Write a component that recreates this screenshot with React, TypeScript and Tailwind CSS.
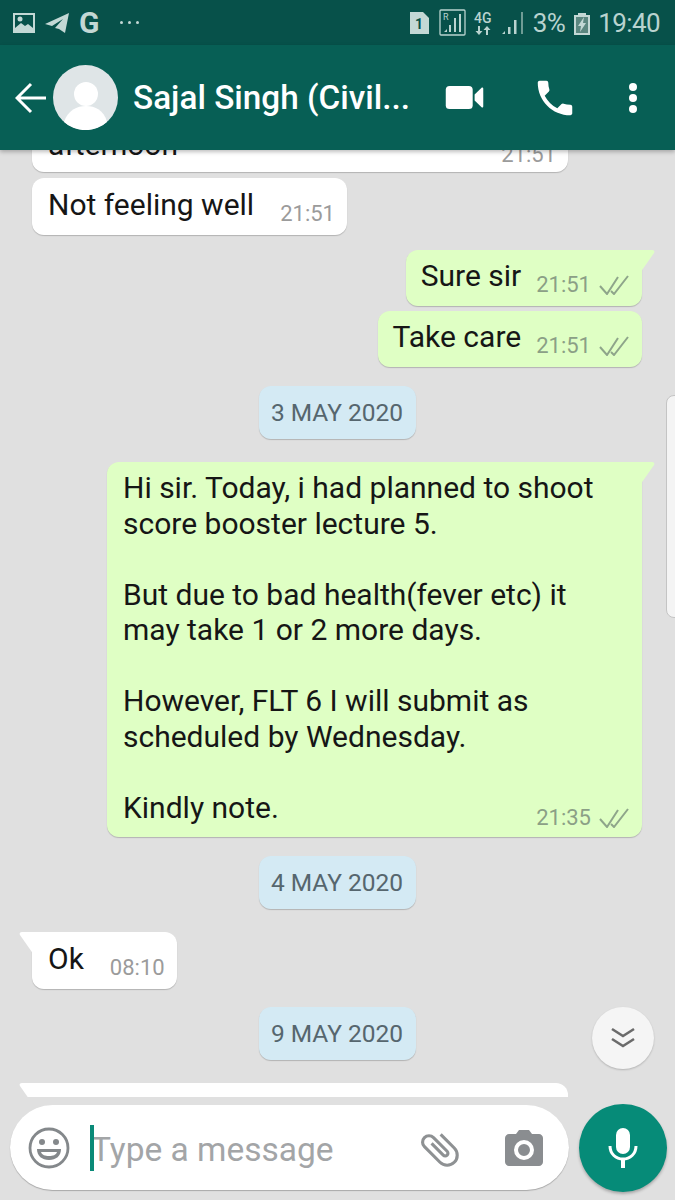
import { ReactNode } from "react";

const DoubleCheck = () => (
  <svg width="30" height="20" viewBox="0 0 30 20" fill="none" stroke="#8ea58a" strokeWidth="2" className="ml-[8px]">
    <path d="M1 11l7 8L19 2" />
    <path d="M12 16l3 3L29 1" />
  </svg>
);

function Time({ t, sent }: { t: string; sent?: boolean }) {
  return (
    <span className={`flex items-center text-[22px] leading-[26px] ${sent ? "text-[#8b9f86]" : "text-[#9b9b9b]"}`}>
      {t}
      {sent && <DoubleCheck />}
    </span>
  );
}

function TailRight() {
  return (
    <svg width="16" height="24" viewBox="0 0 16 24" className="absolute right-[-14px] top-0">
      <path d="M0 0h12c2 0 3 1.500 2 3L0 23z" fill="#dfffc4" />
    </svg>
  );
}

function TailLeft() {
  return (
    <svg width="16" height="24" viewBox="0 0 16 24" className="absolute left-[-14px] top-0">
      <path d="M16 0H4C2 0 1 1.500 2 3l14 20z" fill="#ffffff" />
    </svg>
  );
}

function Sent({ text, time, tail, className }: { text: string; time: string; tail?: boolean; className?: string }) {
  return (
    <div className={`relative flex h-[56px] shrink-0 items-start self-end rounded-[12px] bg-[#dfffc4] pl-[15px] pr-[13px] shadow-[0_1px_1px_rgba(0,0,0,0.2)] ${tail ? "rounded-tr-none" : ""} ${className ?? ""}`}>
      {tail && <TailRight />}
      <span className="mt-[8px] text-[30px] leading-[36px] text-[#161616]">{text}</span>
      <span className="ml-[15px] mt-[22px]">
        <Time t={time} sent />
      </span>
    </div>
  );
}

function Received({ text, time, tail, className }: { text: string; time: string; tail?: boolean; className?: string }) {
  return (
    <div className={`relative flex h-[57px] shrink-0 items-start self-start rounded-[12px] bg-white pl-[16px] pr-[12px] shadow-[0_1px_1px_rgba(0,0,0,0.2)] ${tail ? "rounded-tl-none" : ""} ${className ?? ""}`}>
      {tail && <TailLeft />}
      <span className="mt-[9px] text-[30px] leading-[36px] text-[#161616]">{text}</span>
      <span className="ml-[26px] mt-[23px]">
        <Time t={time} />
      </span>
    </div>
  );
}

function DateChip({ children, className }: { children: ReactNode; className?: string }) {
  return (
    <div className={`flex h-[53px] w-[157px] shrink-0 items-center justify-center self-center rounded-[12px] bg-[#d4eaf4] pt-[2px] text-[24.500px] text-[#56666e] shadow-[0_1px_1px_rgba(0,0,0,0.2)] ${className ?? ""}`}>
      {children}
    </div>
  );
}

function StatusBar() {
  return (
    <div className="flex h-[45px] shrink-0 items-center justify-between bg-[#07514a] pl-[13px] pr-[15px] text-[#b9d3cf]">
      <div className="flex items-center">
        <svg width="22" height="22" viewBox="0 0 22 22">
          <path fill="#c3d8d5" fillRule="evenodd" d="M0 1h22v20H0zM2 3v13l6-5 4 3 3-2 5 4V3z" />
          <circle cx="7" cy="7" r="2.500" fill="#c3d8d5" />
        </svg>
        <svg width="24" height="22" viewBox="0 0 24 22" className="ml-[10px]">
          <path fill="#c3d8d5" d="M0 12L24 1l-4 20-6-4-4-1 8-9-11 7z" />
        </svg>
        <span className="ml-[10px] text-[30px] font-bold leading-none text-[#c3d8d5]">G</span>
        <span className="ml-[21px] flex gap-[5px]">
          <i className="h-[3px] w-[3px] rounded-full bg-[#c3d8d5]" />
          <i className="h-[3px] w-[3px] rounded-full bg-[#c3d8d5]" />
          <i className="h-[3px] w-[3px] rounded-full bg-[#c3d8d5]" />
        </span>
      </div>
      <div className="flex items-center">
        <svg width="21" height="24" viewBox="0 0 21 24">
          <path fill="#c3d8d5" d="M1 1h13l6 6v16H1z" />
          <text x="6" y="18" fontSize="14" fontWeight="700" fill="#07514a" fontFamily="Roboto">1</text>
        </svg>
        <svg width="27" height="27" viewBox="0 0 27 27" className="ml-[9px]" fill="none">
          <rect x="1" y="1" width="25" height="25" rx="1" stroke="#b9d3cf" strokeWidth="1.300" />
          <text x="4" y="11" fontSize="9" fill="#b9d3cf" fontFamily="Roboto">R</text>
          <path fill="#b9d3cf" d="M5 23l3-3v3zM10 23v-7h2v7zM15 23V9h2v14zM20 23V5h2v18z" />
        </svg>
        <div className="ml-[7px] flex w-[20px] flex-col items-center gap-[1px] leading-none">
          <span className="text-[14px] font-medium leading-[14px]">4G</span>
          <svg width="16" height="9" viewBox="0 0 16 9" fill="#b9d3cf">
            <path d="M3 0h2v5h2.500L4 9 .5 5H3zM11 9h2V4h2.500L12 0 8.500 4H11z" />
          </svg>
        </div>
        <svg width="22" height="24" viewBox="0 0 22 24" className="ml-[9px]">
          <path fill="#b9d3cf" d="M0 23l3-3v3zM6 23v-7h2.500v7zM12 23V9h2.500v14z" />
          <path fill="#6f9c95" d="M19 23V1h2v22z" />
        </svg>
        <span className="ml-[9px] text-[26px] leading-none tracking-[-0.6px]">3%</span>
        <svg width="16" height="24" viewBox="0 0 16 24" className="ml-[9px]">
          <path fill="#c3d8d5" d="M4 2h8v2h4v20H0V4h4z" />
          <path fill="#5b8780" d="M2 6h12v16H2z" />
          <path fill="#c3d8d5" d="M10 6L4 15h3l-1 6 6-9H9z" />
        </svg>
        <span className="ml-[8px] text-[26px] leading-none tracking-[-0.6px]">19:40</span>
      </div>
    </div>
  );
}

function Header() {
  return (
    <header className="relative z-10 flex h-[105px] shrink-0 items-center bg-[#075f55] text-white shadow-[0_2px_4px_rgba(0,0,0,0.25)]">
      <svg width="32" height="32" viewBox="0 0 32 32" fill="none" stroke="white" strokeWidth="3" className="ml-[15px] shrink-0">
        <path d="M31 16H3M16 2L2 16l14 14" />
      </svg>
      <svg width="65" height="65" viewBox="0 0 65 65" className="ml-[6px] shrink-0">
        <circle cx="32.500" cy="32.500" r="32.500" fill="#dfe5e7" />
        <circle cx="33" cy="29" r="12" fill="white" />
        <path fill="white" d="M11 57c4-12 13-16 22-16s18 4 21 16a32.500 32.500 0 0 1-43 0z" />
      </svg>
      <span className="ml-[15px] w-[280px] shrink-0 whitespace-nowrap text-[33.300px] font-medium leading-[40px]">Sajal Singh (Civil...</span>
      <svg width="40" height="25" viewBox="0 0 40 26" className="ml-[32px] shrink-0" fill="white">
        <rect x="0" y="1" width="28" height="24" rx="4" />
        <path d="M30 10l7-7c1-1 2-.5 2 1v18c0 1.500-1 2-2 1l-7-7z" />
      </svg>
      <svg width="46" height="46" viewBox="0 0 24 24" className="ml-[47px] shrink-0" fill="white">
        <path d="M6.620 10.790c1.440 2.830 3.760 5.140 6.590 6.590l2.200-2.200c.27-.27.67-.36 1.020-.24 1.120.37 2.330.57 3.570.57.550 0 1 .45 1 1V20c0 .55-.45 1-1 1C10.610 21 3 13.390 3 4c0-.55.45-1 1-1h3.500c.55 0 1 .45 1 1 0 1.250.2 2.450.57 3.570.11.350.03.740-.25 1.020l-2.200 2.200z" />
      </svg>
      <div className="ml-[51px] flex shrink-0 flex-col gap-[3px]">
        <i className="h-[8px] w-[8px] rounded-full bg-white" />
        <i className="h-[8px] w-[8px] rounded-full bg-white" />
        <i className="h-[8px] w-[8px] rounded-full bg-white" />
      </div>
    </header>
  );
}

function Composer() {
  return (
    <footer className="flex h-[103px] shrink-0 items-start pl-[10px] pr-[8px] pt-[7px]">
      <div className="mt-[1px] flex h-[85px] w-[559px] items-center rounded-[43px] bg-white shadow-[0_1px_1px_rgba(0,0,0,0.25)]">
        <svg width="42" height="42" viewBox="0 0 42 42" fill="none" className="ml-[18px] shrink-0">
          <circle cx="21" cy="21" r="19" stroke="#84888b" strokeWidth="2.800" />
          <circle cx="14" cy="15" r="3" fill="#84888b" />
          <circle cx="28" cy="15" r="3" fill="#84888b" />
          <path d="M9 22h24c0 7-5 11-12 11S9 29 9 22z" fill="#84888b" />
          <path d="M13 25h16c-1 3-4 4-8 4s-7-1-8-4z" fill="white" />
        </svg>
        <div className="relative ml-[20px] flex h-[46px] flex-1 items-center">
          <i className="absolute left-0 top-0 h-[46px] w-[4px] bg-[#0a8a78]" />
          <span className="ml-[1px] mt-[4px] whitespace-nowrap text-[33.500px] leading-none text-[#a3a5a7]">Type a message</span>
        </div>
        <svg width="44" height="44" viewBox="0 0 24 24" fill="none" stroke="#8e9193" strokeWidth="1.700" className="mr-[43px] shrink-0">
          <g transform="rotate(-45 12 12)">
            <path d="M17.500 7v10.500a5.500 5.500 0 0 1-11 0V5.500a3.500 3.500 0 0 1 7 0V16a1.500 1.500 0 0 1-3 0V7" />
          </g>
        </svg>
        <svg width="38" height="36" viewBox="0 0 38 36" className="mr-[26px] shrink-0">
          <path fill="#8a8d90" fillRule="evenodd" d="M11 4l3-4h10l3 4h7c2 0 4 2 4 4v24c0 2-2 4-4 4H4c-2 0-4-2-4-4V8c0-2 2-4 4-4zM19 10a10 10 0 1 0 0 20 10 10 0 0 0 0-20zM19 14a6 6 0 1 1 0 12 6 6 0 0 1 0-12z" />
        </svg>
      </div>
      <div className="ml-[10px] flex h-[88px] w-[88px] shrink-0 items-center justify-center rounded-full bg-[#068b78] shadow-[0_2px_3px_rgba(0,0,0,0.25)]">
        <svg width="30" height="40" viewBox="0 0 30 40" fill="none">
          <rect x="8" y="0" width="14" height="26" rx="7" fill="white" />
          <path d="M2 18c0 8 6 13 13 13s13-5 13-13" stroke="white" strokeWidth="3" />
          <path d="M15 30v10" stroke="white" strokeWidth="4" />
        </svg>
      </div>
    </footer>
  );
}

export default function App() {
  return (
    <div className="relative flex h-[1200px] w-[675px] flex-col overflow-hidden bg-[#e0e0e0] font-['Roboto',sans-serif]">
      <StatusBar />
      <Header />
      <main className="flex min-h-0 flex-1 flex-col overflow-hidden pl-[32px] pr-[33px]">
        <div className="-mt-[40px] flex h-[62px] w-[536px] shrink-0 items-end justify-between self-start rounded-[12px] bg-white pl-[16px] pr-[12px] shadow-[0_1px_1px_rgba(0,0,0,0.2)]">
          <span className="mb-[9px] text-[30px] leading-[36px] text-[#161616]">afternoon</span>
          <span className="mb-[4px]">
            <Time t="21:51" />
          </span>
        </div>
        <Received text="Not feeling well" time="21:51" className="mt-[6px]" />
        <Sent text="Sure sir" time="21:51" tail className="mt-[15px]" />
        <Sent text="Take care" time="21:51" className="mt-[5px]" />
        <DateChip className="mt-[19px]">3 MAY 2020</DateChip>
        <div className="relative mt-[23px] h-[375px] w-[535px] shrink-0 self-end rounded-[12px] rounded-tr-none bg-[#dfffc4] pl-[16px] pr-[13px] pt-[8px] text-[30px] leading-[35.500px] text-[#161616] shadow-[0_1px_1px_rgba(0,0,0,0.2)]">
          <TailRight />
          <p>Hi sir. Today, i had planned to shoot</p>
          <p>score booster lecture 5.</p>
          <p className="mt-[35.500px]">But due to bad health(fever etc) it</p>
          <p>may take 1 or 2 more days.</p>
          <p className="mt-[35.500px]">However, FLT 6 I will submit as</p>
          <p>scheduled by Wednesday.</p>
          <p className="mt-[35.500px]">Kindly note.</p>
          <span className="absolute bottom-[6px] right-[13px]">
            <Time t="21:35" sent />
          </span>
        </div>
        <DateChip className="mt-[19px]">4 MAY 2020</DateChip>
        <Received text="Ok" time="08:10" tail className="mt-[23px]" />
        <DateChip className="mt-[18px]">9 MAY 2020</DateChip>
        <div className="relative mt-[23px] h-[40px] w-[536px] shrink-0 self-start rounded-[12px] rounded-tl-none bg-white">
          <TailLeft />
        </div>
      </main>
      <Composer />
      {/* floating bits over the chat */}
      <button className="absolute left-[592px] top-[1007px] flex h-[62px] w-[62px] items-center justify-center rounded-full bg-[#f5f5f5] shadow-[0_1px_2px_rgba(0,0,0,0.2)]">
        <svg width="24" height="22" viewBox="0 0 24 22" fill="none" stroke="#6b6b6b" strokeWidth="2.600">
          <path d="M1 2l11 7 11-7M1 12l11 7 11-7" />
        </svg>
      </button>
      <div className="absolute left-[666px] top-[395px] h-[223px] w-[12px] rounded-l-[8px] border border-[#c4c4c4] bg-[#f4f4f4]" />
    </div>
  );
}
